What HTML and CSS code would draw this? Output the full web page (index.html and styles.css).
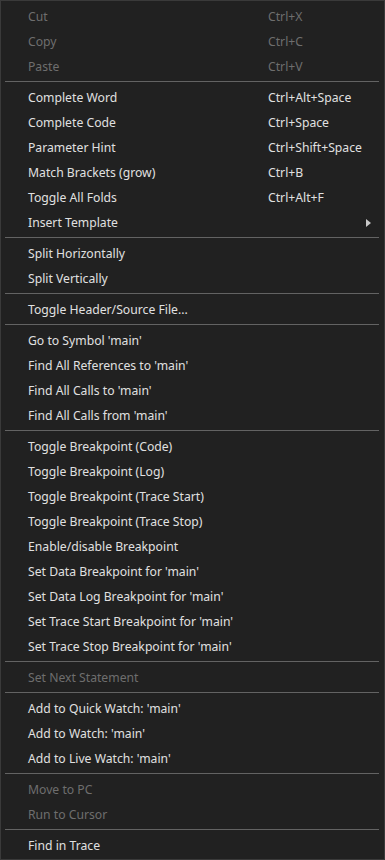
FILE: index.html
```html
<!DOCTYPE html>
<html>
<head>
<meta charset="utf-8">
<link rel="stylesheet" href="styles.css">
</head>
<body>
<div class="menu">
  <div class="item disabled"><span class="label">Cut</span><span class="key">Ctrl+X</span></div>
  <div class="item disabled"><span class="label">Copy</span><span class="key">Ctrl+C</span></div>
  <div class="item disabled"><span class="label">Paste</span><span class="key">Ctrl+V</span></div>
  <div class="sep"></div>
  <div class="item"><span class="label">Complete Word</span><span class="key">Ctrl+Alt+Space</span></div>
  <div class="item"><span class="label">Complete Code</span><span class="key">Ctrl+Space</span></div>
  <div class="item"><span class="label">Parameter Hint</span><span class="key">Ctrl+Shift+Space</span></div>
  <div class="item"><span class="label">Match Brackets (grow)</span><span class="key">Ctrl+B</span></div>
  <div class="item"><span class="label">Toggle All Folds</span><span class="key">Ctrl+Alt+F</span></div>
  <div class="item"><span class="label">Insert Template</span><span class="key"></span><span class="arrow"></span></div>
  <div class="sep"></div>
  <div class="item"><span class="label">Split Horizontally</span></div>
  <div class="item"><span class="label">Split Vertically</span></div>
  <div class="sep"></div>
  <div class="item"><span class="label">Toggle Header/Source File...</span></div>
  <div class="sep"></div>
  <div class="item"><span class="label">Go to Symbol 'main'</span></div>
  <div class="item"><span class="label">Find All References to 'main'</span></div>
  <div class="item"><span class="label">Find All Calls to 'main'</span></div>
  <div class="item"><span class="label">Find All Calls from 'main'</span></div>
  <div class="sep"></div>
  <div class="item"><span class="label">Toggle Breakpoint (Code)</span></div>
  <div class="item"><span class="label">Toggle Breakpoint (Log)</span></div>
  <div class="item"><span class="label">Toggle Breakpoint (Trace Start)</span></div>
  <div class="item"><span class="label">Toggle Breakpoint (Trace Stop)</span></div>
  <div class="item"><span class="label">Enable/disable Breakpoint</span></div>
  <div class="item"><span class="label">Set Data Breakpoint for 'main'</span></div>
  <div class="item"><span class="label">Set Data Log Breakpoint for 'main'</span></div>
  <div class="item"><span class="label">Set Trace Start Breakpoint for 'main'</span></div>
  <div class="item"><span class="label">Set Trace Stop Breakpoint for 'main'</span></div>
  <div class="sep"></div>
  <div class="item disabled"><span class="label">Set Next Statement</span></div>
  <div class="sep"></div>
  <div class="item"><span class="label">Add to Quick Watch: 'main'</span></div>
  <div class="item"><span class="label">Add to Watch: 'main'</span></div>
  <div class="item"><span class="label">Add to Live Watch: 'main'</span></div>
  <div class="sep"></div>
  <div class="item disabled"><span class="label">Move to PC</span></div>
  <div class="item disabled"><span class="label">Run to Cursor</span></div>
  <div class="sep"></div>
  <div class="item"><span class="label">Find in Trace</span></div>
</div>
</body>
</html>
```
FILE: styles.css
```css
html, body {
  margin: 0;
  padding: 0;
  background: #212121;
}
.menu {
  box-sizing: border-box;
  width: 385px;
  height: 860px;
  border: 1px solid #3a3a3a;
  padding: 3px 0 1px 0;
  background: #212121;
  font-family: "Noto Sans", "Open Sans", sans-serif;
  font-size: 12.2px;
  color: #e0e0e0;
}
.item {
  position: relative;
  display: flex;
  align-items: center;
  height: 25px;
  padding-left: 27px;
  white-space: nowrap;
}
.label {
  width: 240px;
}
.key {
  flex: 1;
}
.disabled {
  color: #6e6e6e;
}
.sep {
  height: 1px;
  margin: 2px 5px 3px 4px;
  background: #636363;
}
.arrow {
  position: absolute;
  left: 365px;
  top: 9px;
  width: 0;
  height: 0;
  border-top: 4px solid transparent;
  border-bottom: 4px solid transparent;
  border-left: 5px solid #c8c8c8;
}
```
